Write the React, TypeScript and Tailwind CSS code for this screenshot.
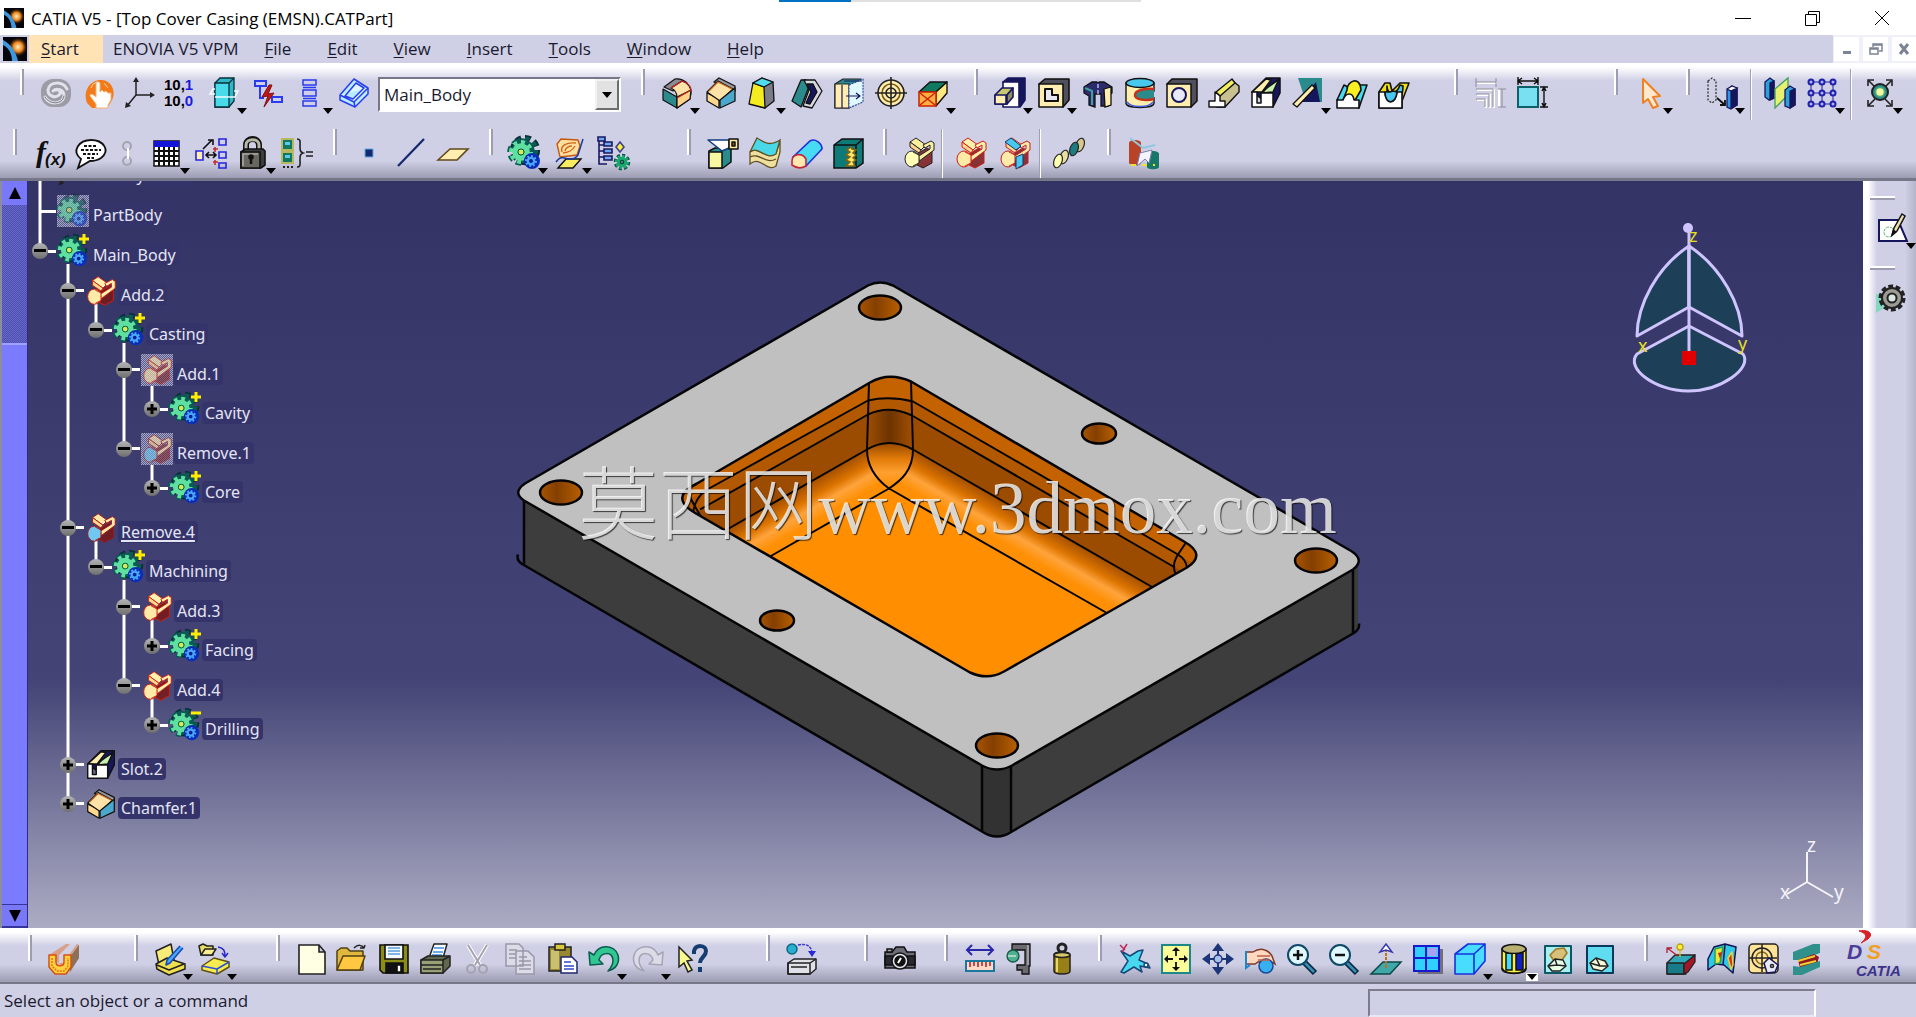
import React, { useState } from 'react';
import clsx from 'clsx';

type IconName = string;

interface Tool {
  icon: IconName;
  label: string;
  menu?: boolean;
  size?: 'xs' | 'sm' | 'md' | 'lg';
  whiteMenu?: boolean;
}

interface TreeNode {
  label: string;
  icon: IconName;
  depth: number;
  state?: 'open' | 'closed';
  hidden?: boolean;
  tall?: boolean;
  active?: boolean;
}

const navy = '#16165c';
const cream = '#ffeeb0';
const teal = '#2a8a8c';

function Gear({ cx, cy, r, fill, edge }: { cx: number; cy: number; r: number; fill: string; edge: string }) {
  return (
    <g fill="none">
      <circle cx={cx} cy={cy} r={r} stroke={edge} strokeWidth={r * 0.75} pathLength={16} strokeDasharray="1.2 .8" />
      <circle cx={cx} cy={cy} r={r * 0.95} stroke={fill} strokeWidth={r * 0.5} pathLength={16} strokeDasharray="1 1" />
      <circle cx={cx} cy={cy} r={r * 0.55} stroke={fill} strokeWidth={r * 0.65} />
      <circle cx={cx} cy={cy} r={r * 0.25} stroke={edge} strokeWidth="1.5" />
    </g>
  );
}

function BodyGears() {
  return (
    <>
      <Gear cx={16} cy={13} r={11} fill="#0d5a52" edge="#08303a" />
      <Gear cx={12} cy={15} r={10} fill="#5fe0a0" edge="#0a5a56" />
      <circle cx="12" cy="15" r="3" fill="#d8e860" stroke="#063" />
      <circle cx="23" cy="24" r="8" fill="#0a2fc0" />
      <Gear cx={22} cy={24} r={5} fill="#48a8ff" edge="#0a1f90" />
    </>
  );
}

function Boolean({ edge, top, ball }: { edge: string; top: string; ball: string }) {
  return (
    <g stroke={edge} strokeWidth="1" strokeLinejoin="round">
      <path d="M14 17l10-6 5 3v12l-9 5-6-3z" fill="#7a1818" fillOpacity=".85" />
      <path d="M7 5l6-4 10 7-5 5z" fill={top} />
      <path d="M7 5v5l9 6 2-3z" fill="#ffd890" />
      <path d="M20 8l8-4 3 2v7L15 25l-4-3 16-10V8l-5 3z" fill={top} />
      <ellipse cx="9" cy="22" rx="7" ry="8" fill={ball} />
      <path d="M10 15l6 3v8l-6 3" fill={ball} />
    </g>
  );
}

const icons: Record<IconName, React.ReactNode> = {
  update: (
    <g fill="none" strokeLinecap="round">
      <rect x="1" y="2" width="30" height="28" rx="12" fill="#9c9ca4" />
      <path d="M27 12C23 4 9 4 8 13c0 7 8 8 11 5s0-6-3-5M5 20c4 8 18 8 19-1 0-7-8-8-11-5" stroke="#e2e2ec" strokeWidth="3" />
      <path d="M5 20c4 8 18 8 19-1" stroke="#77777f" />
    </g>
  ),
  hand: (
    <g>
      <path d="M3 26C-2 12 8 2 18 3s15 12 9 22l-4 6H8z" fill="#f27a18" />
      <path d="M12 31v-4L6 19c0-3 3-2 6 1V7c0-3 4-3 4 0v8l2-2 2 2 2-1 2 2 3 0v7l-3 5v3z" fill="#fff" stroke="#f8b070" />
      <path d="M7 11a8 8 0 0 1 6-6M20 6l4 5" stroke="#ffd0a0" fill="none" />
    </g>
  ),
  axis: (
    <g stroke="#222" fill="#222">
      <path d="M12 18V3M12 18h15M12 18L3 29" fill="none" strokeWidth="1.5" />
      <path d="M9 5l3-5 3 5zM26 15l5 3-5 3zM1 31l1-6 5 4z" stroke="none" />
    </g>
  ),
  units: (
    <g fontFamily="Liberation Sans, Arial, sans-serif" fontWeight="bold" fontSize="15">
      <text x="0" y="13">10,<tspan fill="#1c1ce0">1</tspan></text>
      <text x="0" y="29">10,<tspan fill="#1c1ce0">0</tspan></text>
    </g>
  ),
  section: (
    <g stroke="#08303a" strokeWidth="1.3">
      <path d="M7 6l5-5h14v23l-5 6H7z" fill="#30b8c8" />
      <path d="M7 6h14v24H7z" fill="#48dcea" />
      <path d="M21 6l5-5" />
      <path d="M7 17H2l3-5h2M21 20l6 0 3-6h-4M7 20h14" fill="none" stroke="#eefcff" strokeWidth="1.6" />
    </g>
  ),
  broken: (
    <g fill="none" strokeWidth="2">
      <path d="M3 4h11v5H3zM20 20h10v5H20zM8 9v12h4" stroke="#2a3cf0" />
      <path d="M17 8l-7 12 6-1-4 11 10-14-6 1 4-9z" fill="#c01818" stroke="#801010" strokeWidth="1" />
    </g>
  ),
  stack: <path d="M9 3h13v5H9zM9 13h13v6H9zM9 24h13v5H9zM9 10.500h13M9 21.500h13" fill="none" stroke="#2a3cf0" strokeWidth="1.500" />,
  eraser: (
    <g stroke="#2a3cf0" strokeWidth="1.5" strokeLinejoin="round">
      <path d="M2 18L16 2l14 9v6L17 30 2 23z" fill="#b8ecff" />
      <path d="M2 18l14 7 14-14M16 25l1 5M7 19L18 6l8 5-11 11z" fill="#dff6ff" />
    </g>
  ),
  fillet: (
    <g stroke="#111" strokeWidth="1.2" strokeLinejoin="round">
      <path d="M2 12l14 8v11L2 23z" fill={teal} />
      <path d="M3 10L14 2c5-1 10 2 12 4L12 14z" fill="#8a8a92" />
      <path d="M10 11L21 4c6 2 9 6 9 12l-1 6-13 9V20c0-4-2-7-6-9z" fill="#ffe2a8" />
      <path d="M16 20v11l13-9 1-9z" fill="#ffd088" />
      <path d="M10 11L21 4c6 2 9 5 9 9l-14 8" stroke="#c02020" fill="none" />
    </g>
  ),
  chamfer: (
    <g stroke="#111" strokeWidth="1.3" strokeLinejoin="round">
      <path d="M2 16l12 6v9L2 24z" fill="#ffd890" />
      <path d="M9 5l5-4 16 8v5l-4-1z" fill="#9a9aa0" />
      <path d="M2 15L13 4l15 8-13 12z" fill="#ffe2a8" />
      <path d="M15 23l15-12v13l-15 7z" fill="#4aa8cc" />
      <path d="M4 14L13 5l14 7" stroke="#c86820" fill="none" />
    </g>
  ),
  draft: (
    <g stroke="#111" strokeWidth="1.3" strokeLinejoin="round">
      <path d="M6 6l9-5 11 4 1 19-9 7-14-4z" fill="#7c7c86" />
      <path d="M6 6l11 4 1 21-16-4z" fill="#f4ec20" />
      <path d="M6 6l9-5 11 4-9 5z" fill="#50dcf0" />
    </g>
  ),
  shell: (
    <g stroke="#111" strokeWidth="1.3" strokeLinejoin="round">
      <path d="M1 24L10 3h5l4 4-7 18-2 5z" fill={teal} />
      <path d="M13 3h11l7 11-10 17-9-2 6-16z" fill="#d8d8e0" />
      <path d="M16 7h6l4 8-7 12-4-1 5-11z" fill={navy} />
    </g>
  ),
  thickness: (
    <g stroke="#222" strokeWidth="1.2" strokeLinejoin="round">
      <path d="M2 7l8-5h18v22l-12 7H2z" fill={teal} />
      <path d="M2 7h14v24H2z" fill={cream} />
      <path d="M16 8l14-6v23l-14 6z" fill="#e0f8ff" stroke="#3050a0" strokeDasharray="2 1" />
      <path d="M11 4h18M13 19h14m-4-3l4 3-4 3M9 8v23" stroke={navy} fill="none" />
    </g>
  ),
  thread: (
    <g fill="none" stroke="#222" strokeWidth="1.6">
      <circle cx="16" cy="16" r="13" fill={cream} />
      <circle cx="16" cy="16" r="9" stroke="#7a5a10" />
      <circle cx="16" cy="16" r="5" />
      <path d="M16 0v32M0 16h32" />
    </g>
  ),
  removeFace: (
    <g stroke="#111" strokeWidth="1.4" strokeLinejoin="round">
      <path d="M2 15L13 5h17L19 15z" fill="#0e7a60" />
      <path d="M19 15L30 5v11L19 29z" fill="#ffe880" />
      <path d="M2 15h17v14H2z" fill="#ffb040" stroke="#d02000" strokeWidth="1.500" />
      <path d="M3 16l15 12M18 16L3 28" stroke="#d02000" strokeWidth="1.500" />
    </g>
  ),
  pad: (
    <g stroke={navy} strokeWidth="1.6" strokeLinejoin="round">
      <path d="M9 5l5-4h17v22l-5 7z" fill={navy} />
      <path d="M9 5h16v25H9z" fill="#fff" />
      <path d="M1 18l7-7h11l-6 7v9H1z" fill="#c8c870" />
      <path d="M13 18l6-7v9l-6 7z" fill="#8c8c60" />
      <path d="M1 18h11v9H1z" fill={cream} />
    </g>
  ),
  pocket: (
    <g stroke="#111" strokeWidth="1.6" strokeLinejoin="round">
      <path d="M1 7l6-5h24v21l-6 7z" fill="#50505c" />
      <path d="M1 7h24v23H1z" fill={cream} />
      <path d="M7 12h7v6h6v6H7z" fill="#e8e8f0" strokeWidth="2" />
    </g>
  ),
  shaft: (
    <g stroke="#111" strokeWidth="1.3">
      <path d="M2 10l8-5h12l8 5v6l-4 3v10h-7V17h-6v13l-6-2V19l-5-3z" fill="#2c2c6c" />
      <path d="M22 12l7-2v18l-6 2z" fill={cream} />
      <path d="M3 11l7 3v14" fill="none" stroke="#40a0a0" strokeWidth="2" />
      <path d="M16 1v27" stroke="#c8c8ff" strokeDasharray="4 2" />
    </g>
  ),
  groove: (
    <g stroke="#111" strokeWidth="1.4">
      <path d="M2 6v20c0 6 28 6 28 0v-5c-8 2-16 0-16-3s8-5 16-4V6z" fill={cream} />
      <path d="M30 12c-8-1-19 1-19 6s11 6 19 4" fill={teal} stroke="#c83018" strokeWidth="2.500" />
      <path d="M3 25c4 6 22 6 26 0" fill="none" stroke="#4060e0" />
      <ellipse cx="16" cy="6" rx="14" ry="4.500" fill="#48c8ec" />
    </g>
  ),
  hole: (
    <g stroke="#111" strokeWidth="1.5" strokeLinejoin="round">
      <path d="M1 7l5-5h25v22l-6 6z" fill="#50505c" />
      <path d="M1 7h24v23H1z" fill={cream} />
      <circle cx="13" cy="18" r="7" fill="#e8e8f8" stroke={navy} strokeWidth="2" />
    </g>
  ),
  rib: (
    <g stroke="#111" strokeWidth="1.4" strokeLinejoin="round">
      <path d="M8 17L26 5l5 4v6L17 30H9z" fill="#c8c090" />
      <path d="M8 15L24 2l3 4-15 13z" fill="#f0ec60" />
      <path d="M1 30v-6h6v-9l5 4v5h5v6z" fill="#fff" />
    </g>
  ),
  slot: (
    <g stroke="#111" strokeWidth="1.5" strokeLinejoin="round">
      <path d="M2 15L16 1h14v15L23 30z" fill={navy} />
      <path d="M2 15L16 2l5 1-9 12z" fill={cream} />
      <path d="M13 16c2-6 10-8 16-14l-6 13z" fill="#c8f0b0" />
      <path d="M2 15h5v11h4V16h12v14H2z" fill="#fff" />
    </g>
  ),
  stiffener: (
    <g strokeLinejoin="round">
      <path d="M6 1h24v24H14z" fill={teal} />
      <path d="M7 25L24 5l4 20z" fill={navy} />
      <path d="M1 27L20 8l3 3L5 30z" fill={cream} stroke="#111" strokeWidth="1.3" />
    </g>
  ),
  loft: (
    <g stroke="#111" strokeWidth="1.6" strokeLinejoin="round">
      <path d="M1 23L8 8l6 3 8-3h9l-6 17-2 6z" fill="#48d8f0" />
      <path d="M11 13c0-9 13-15 14 0l-7 12c0-9-9-6-11-2z" fill="#f8f020" />
      <path d="M1 23h6c3-8 10-8 11 0h5v8H1z" fill="#fff" />
    </g>
  ),
  cutLoft: (
    <g stroke="#111" strokeWidth="1.6" strokeLinejoin="round">
      <path d="M1 15l6-9h5l2 8 8-8h9l-7 18v7H1z" fill="#f0e018" />
      <path d="M9 9c0 10 10 8 13-1l3 1c0 12-6 20-9 20s-8-4-7-11z" fill="#48c8f0" />
      <path d="M1 15h6c0 13 11 13 12 0h5v16H1z" fill="#fff" />
      <path d="M7 15c0 13 11 13 12 0l-4-1-3 1z" fill="#48c8f0" />
    </g>
  ),
  constraintDialog: (
    <g fill="none" stroke="#fff" strokeWidth="1">
      <path d="M3 6h20M3 13h17v18M3 18h13v13M3 23h9v8M25 12v18" strokeWidth="2" />
      <path d="M2 5h20M2 1v9M22 1v9M2 12h17v18M2 17h13v13M2 22h9v8M24 12h8M24 30h8M28 12v18" stroke="#8c8c98" />
    </g>
  ),
  constraint: (
    <g strokeWidth="1.4" stroke="#111" fill="none">
      <rect x="2" y="10" width="20" height="20" fill="#78e0f0" stroke="#0e6068" strokeWidth="2" />
      <path d="M2 0v8M22 0v8M3 4h18M6 1L2 4l4 3M18 1l4 3-4 3M24 10h8M24 30h8M28 11v18M26 14l2-4 2 4M26 26l2 4 2-4" />
    </g>
  ),
  cursor: <path d="M9 2l17 17-7 1 5 9-5 2-5-9-5 4z" fill="#ffe8d0" stroke="#f08020" strokeWidth="2" strokeLinejoin="round" />,
  translate: (
    <g stroke={navy} strokeWidth="1.3">
      <path d="M2 4l4-3 4 3v19l-4 3-4-3z" fill="none" strokeDasharray="2 1.500" stroke="#333" />
      <path d="M11 21l8 7m-5 0h5v-5" fill="none" stroke="#111" strokeWidth="1.8" />
      <path d="M21 13l5-4 5 3v16l-6 4-4-2z" fill="#2c9ae8" />
      <path d="M25 14l6-3v17l-6 3z" fill={navy} />
      <path d="M21 12l5-3 5 2-6 3z" fill="#fff" />
    </g>
  ),
  mirror: (
    <g stroke={navy} strokeWidth="1.3">
      <path d="M1 5l5-4 4 3v17l-5 2-4-3z" fill="#2ca0d8" />
      <path d="M6 6l4-2v17l-4 2z" fill={navy} />
      <path d="M11 12L24 1v17L11 31z" fill="#e8f070" stroke="#40a060" />
      <path d="M21 13l5-4 5 3v16l-5 3-5-2z" fill="#2ca0d8" />
      <path d="M26 14l5-2v16l-5 3z" fill={navy} />
    </g>
  ),
  pattern: (
    <g fill="#b0b4ff" stroke="#2020a8" strokeWidth="2">
      <path d="M2 5h28M2 16h28M2 27h28M5 2v28M16 2v28M27 2v28" strokeWidth="1" />
      {[5, 16, 27].map((x) => [5, 16, 27].map((y) => <circle key={`${x}-${y}`} cx={x} cy={y} r="2.500" />))}
    </g>
  ),
  scaling: (
    <g stroke="#222" strokeWidth="1.6" fill="none">
      <path d="M5 4l6 6M27 4l-6 6M5 28l6-6M27 28l-6-6M4 9V3h6M22 3h6v6M4 23v6h6M22 29h6v-6" />
      <circle cx="16" cy="15" r="8" fill={teal} strokeWidth="2" />
      <circle cx="16" cy="15" r="4.500" fill="#f0f8a0" stroke="#50a878" />
    </g>
  ),
  formula: (
    <g fontFamily="Liberation Serif, serif" fontStyle="italic" fontWeight="bold" fill="#111">
      <text x="3" y="25" fontSize="30">f</text>
      <text x="12" y="28" fontSize="17" fontFamily="Liberation Sans, sans-serif">(x)</text>
    </g>
  ),
  comment: (
    <g stroke="#111" strokeWidth="1.8">
      <path d="M6 22C-4 14 4 3 16 3s20 10 10 18c-3 2-8 3-11 3L3 31z" fill="#fff" />
      <path d="M9 9h13M6 13h20M8 17h15M12 21h7" strokeDasharray="3 1.500" />
    </g>
  ),
  link: (
    <g fill="none" stroke="#a4a4b0" strokeWidth="2">
      <circle cx="14" cy="9" r="4" />
      <circle cx="14" cy="24" r="4" />
      <path d="M15 11v11" stroke="#fff" />
    </g>
  ),
  table: (
    <g>
      <path d="M3 4h25v25H3z" fill="#fff" stroke="#111" strokeWidth="1.5" />
      <path d="M3 4h25v6H3z" fill="#1414d8" />
      <path d="M3 14h25M3 19h25M3 24h25M8 10v19M13 10v19M18 10v19M23 10v19" stroke="#111" strokeWidth="2" />
    </g>
  ),
  relations: (
    <g fill="none" stroke="#2424e0" strokeWidth="1.6">
      <path d="M1 14h7v9H1z" fill={cream} />
      <path d="M24 2h7v6h-7zM24 15h7v6h-7zM24 26h7v5h-7z" />
      <path d="M8 12l9-9m-4 0h5v5M11 18h10m-3-3l3 3-3 3M14 15l-3 3 3 3" stroke="#111" />
      <path d="M18 12h5M18 25h5M20 10v5M20 23v5" stroke="#c03030" />
    </g>
  ),
  lock: (
    <g stroke="#111" strokeWidth="1.6">
      <path d="M9 15V8c0-8 13-8 13 0v7" fill="none" stroke="#111" strokeWidth="6" />
      <path d="M9 15V8c0-7 13-7 13 0v7" fill="none" stroke="#b8b8a8" strokeWidth="3" />
      <path d="M4 15l4-3h18l2 2v14l-4 3H4z" fill="#3c3c3c" />
      <path d="M4 15h19v16H4z" fill="#686860" />
      <path d="M6 29V17h15" stroke="#a8a8a0" fill="none" />
      <circle cx="14" cy="20" r="2" fill="#111" />
      <path d="M14 21v6" strokeWidth="2.500" />
    </g>
  ),
  equivalent: (
    <g fill="none" stroke="#222">
      <path d="M1 2h11v11H1zM1 15h11v11H1z" fill="#107860" stroke="#b8b860" strokeWidth="2" />
      <path d="M4 5h5v3H4zM4 18h5v3H4z" fill="#60c8f0" stroke="none" />
      <path d="M2 30h2M6 30h2M10 30h2" strokeWidth="2" />
      <path d="M16 2c4 0 3 3 3 7s0 6 3 7c-3 1-3 3-3 7s1 7-3 7M25 15h7M25 19h7" strokeWidth="1.600" />
    </g>
  ),
  point: <path d="M12 12h8v8h-8z" fill="#14286e" stroke="#60a8e8" />,
  line: <path d="M3 29L29 2" stroke="#14286e" strokeWidth="2.200" />,
  plane: <path d="M1 23L13 12h18L20 23z" fill={cream} stroke="#604818" strokeWidth="1.600" />,
  body: <BodyGears />,
  geoset: (
    <g stroke="#111" strokeWidth="1.4">
      <path d="M4 7l4-5 17 1 2 6-3 9-17 2z" fill="#ffe0a0" stroke="#c85810" />
      <path d="M9 15c-2-6 4-10 14-9M10 16c6-1 9-2 12-7M12 14c0-3 4-5 7-5" stroke="#d06818" fill="none" />
      <path d="M5 31l8-9h15l-8 9z" fill="#f8ec60" />
      <path d="M3 25c7-11 14 4 22-7l5-16" fill="none" stroke="#1c3c98" strokeWidth="1.500" />
    </g>
  ),
  insertTree: (
    <g fill="none" stroke="#181860" strokeWidth="1.6">
      <path d="M2 2v25h8M2 8h6M2 14h6M2 20h6" />
      <path d="M7 5h8v4H7zM7 12h8v4H7zM7 19h8v4H7zM1 0h7v4H1z" fill="#70a8f0" />
      <path d="M23 5l4 5-4 5-4-5z" fill="#f8f040" stroke="#404090" />
      <Gear cx={25} cy={25} r={6} fill="#18a870" edge="#084838" />
    </g>
  ),
  split: (
    <g stroke="#111" strokeWidth="1.5" strokeLinejoin="round">
      <path d="M2 14l6-3h10l6-3v17l-8 6H2z" fill={teal} />
      <path d="M2 15h13v16H2z" fill="#f8f8a0" />
      <path d="M1 3l21 0v8l-7 3z" fill="#fff" stroke="#103c80" />
      <path d="M22 2h9v10h-9z" fill="#ffe8a0" />
      <path d="M25 5h3v4h-3z" fill="#806018" />
    </g>
  ),
  thickSurface: (
    <g stroke="#605020" strokeWidth="1.3">
      <path d="M1 15C10 8 16 24 27 16l4-12v11l-4 14C18 36 12 18 1 27z" fill="#f0e0a0" />
      <path d="M1 15L8 1c7 4 12 9 23 2l-4 14C16 24 10 8 1 15z" fill="#48d8e8" />
      <path d="M1 20c10-5 15 8 26 2" fill="none" />
    </g>
  ),
  closeSurface: (
    <g stroke="#2030d8" strokeWidth="1.600">
      <path d="M2 20L19 4c5-3 12 2 12 8L15 29z" fill="#48dcf4" />
      <path d="M1 24c0-7 10-9 14-2v7c-5 3-10 2-14-1z" fill="#ffe8b0" stroke="#c02838" />
    </g>
  ),
  sew: (
    <g stroke="#111" strokeWidth="1.500">
      <path d="M1 8l8-6h21v24l-7 5H1z" fill="#0e7a78" />
      <path d="M1 8h22L30 2M23 8v23" fill="none" />
      <path d="M18 10l-4 3 3 2-4 3 4 2-4 3 4 2-4 4h9l-2-4 3-2-3-2 3-3-3-2 3-3-4-1z" fill="#f8e868" stroke="#806010" />
    </g>
  ),
  assemble: <Boolean edge="#222" top="#f8f0a0" ball="#ffffb8" />,
  add: <Boolean edge="#d02010" top="#fff0b0" ball="#ffeaa8" />,
  remove: <Boolean edge="#a01818" top="#ffe8a8" ball="#70c8f0" />,
  unionTrim: (
    <g>
      <Boolean edge="#c02020" top="#ffe8a8" ball="#ffeaa8" />
      <path d="M6 5l6-4 10 8-5 4zM17 20l7-3v11l-7 4z" fill="#48c8f0" stroke="#143868" />
    </g>
  ),
  lump: (
    <g stroke="#222" strokeWidth="1.200">
      <ellipse cx="11" cy="20" rx="4" ry="7" fill="#e8e0a0" transform="rotate(20 11 20)" />
      <ellipse cx="5" cy="24" rx="4" ry="7" fill="#ffffb0" transform="rotate(20 5 24)" />
      <ellipse cx="27" cy="8" rx="4" ry="7" fill="#d8c890" transform="rotate(20 27 8)" />
      <ellipse cx="21" cy="12" rx="4" ry="7" fill="#1c7c80" transform="rotate(20 21 12)" />
    </g>
  ),
  powercopy: (
    <g>
      <path d="M2 6c0-4 12-4 12 0v20c0 3-12 2-12 0z" fill="#b84428" />
      <path d="M3 1l13 10 12-3" stroke="#90c8e0" strokeWidth="2" fill="none" />
      <path d="M20 17c0-4 12-4 12 0v13c0 3-12 3-12 0z" fill="#187868" />
      <path d="M4 28h24" stroke="#f0e030" strokeWidth="2" strokeDasharray="5 6" />
      <path d="M10 29l3-13 12-3-3 13-4-4z" fill="#f4f4ff" stroke="#8080b0" />
    </g>
  ),
  sketch: (
    <g>
      <path d="M2 8h19l9 21H2z" fill="#fff" stroke={navy} strokeWidth="2" />
      <circle cx="12" cy="20" r="5" fill="none" stroke="#60b070" strokeDasharray="3 1" />
      <path d="M15 23l2-7L25 2l3 2-8 15z" fill="#ece0b0" stroke="#111" strokeWidth="1.500" />
      <path d="M14 25l2-8 4 3z" fill="#111" />
    </g>
  ),
  workshop: (
    <g>
      <path d="M1 12h8v14l-8 5z" fill="#84d8c0" />
      <circle cx="17" cy="16" r="11" fill="none" stroke="#222" strokeWidth="5" pathLength={20} strokeDasharray="1.300 .7" />
      <circle cx="17" cy="16" r="10" fill="#9c9c94" stroke="#222" strokeWidth="2" />
      <circle cx="17" cy="16" r="4.500" fill="#d8e8e0" stroke="#222" strokeWidth="2" />
    </g>
  ),
  partDesign: (
    <g strokeLinejoin="round" strokeWidth="1.5">
      <path d="M1 12L18 1h4L11 12v8l4 0L29 1l2 1v13L21 29z" fill="#d8a088" />
      <path d="M22 14L31 2v13l-9 14z" fill="#8c7058" />
      <path d="M1 12h7v7c0 5 8 5 8 0v-7h7v12l-5 7H7l-6-7z" fill="#ffd040" stroke="#d85010" />
      <path d="M4 15v8l5 5h7l4-5v-8" fill="none" stroke="#e07818" strokeDasharray="2 1" />
    </g>
  ),
  catalog: (
    <g stroke="#222" strokeWidth="1.500" strokeLinejoin="round">
      <path d="M2 8L17 1l3 16-15 5z" fill="#f8ec78" />
      <path d="M2 21l11-6 18 6v5l-16 6L3 26z" fill="#f0e050" />
      <path d="M3 22l12 5 15-6" fill="none" />
      <path d="M29 5L16 20l-4 2 1-5L26 3" fill="#48a8f0" stroke="#1848b8" />
    </g>
  ),
  catalogOpen: (
    <g stroke="#222" strokeWidth="1.500" strokeLinejoin="round">
      <path d="M1 3l4-2 4 2h6v9H3z" fill="#e8e060" />
      <path d="M3 12l4-6h11l-4 6z" fill="#f8f090" />
      <path d="M20 4c6 1 7 4 7 9m-3-3l3 4 3-4" fill="none" stroke="#2828c8" />
      <path d="M4 23l12-8 15 4v5l-12 7-15-4z" fill="#f8ec50" stroke="#605010" />
      <path d="M4 23l15 3 12-7M19 26v5" fill="none" stroke="#2850d8" />
    </g>
  ),
  file: <path d="M3 2h20l6 7v22H3zM23 2v7h6" fill="#ffffe4" stroke="#222" strokeWidth="1.600" />,
  open: (
    <g stroke="#504010" strokeWidth="1.500" strokeLinejoin="round">
      <path d="M1 27V8l4-3h6l3 3h13v19z" fill="#e0b840" />
      <path d="M1 27l6-14h22l-5 14z" fill="#ffc840" />
      <path d="M18 5c4-4 8-3 10 0l1-3m-1 3h-4" fill="none" stroke="#222" />
    </g>
  ),
  save: (
    <g stroke="#111" strokeWidth="1.600">
      <path d="M2 2h28v28H5l-3-3z" fill="#8c8c18" />
      <path d="M7 2h18v14H7z" fill="#f4f8ff" />
      <path d="M10 5h12M10 8h12M10 11h12" stroke="#58a0e0" />
      <path d="M8 20h17v10H8z" fill="#111" />
      <path d="M19 22h4v7h-4z" fill="#fff" />
    </g>
  ),
  print: (
    <g stroke="#222" strokeWidth="1.500" strokeLinejoin="round">
      <path d="M9 15L14 1h13l-4 14z" fill="#fff" />
      <path d="M14 5h10M13 9h10M12 12h10" stroke="#3890e8" />
      <path d="M1 17l7-4h22v10l-7 7H1z" fill="#606850" />
      <path d="M1 17h22v13H1z" fill="#98a078" />
      <path d="M23 17l7-4M1 22h22M3 26h18" />
    </g>
  ),
  cut: (
    <g fill="none" stroke="#a4a4b0" strokeWidth="2">
      <path d="M6 2l12 20M25 2L13 22" stroke="#fff" strokeWidth="4" />
      <path d="M6 2l12 20M25 2L13 22" />
      <circle cx="9" cy="26" r="4" />
      <circle cx="21" cy="26" r="4" />
    </g>
  ),
  copy: (
    <g fill="#dcdce8" stroke="#9898a8" strokeWidth="1.500">
      <path d="M2 1h13l4 4v18H2zM12 8h12l6 6v17H12z" />
      <path d="M5 7h8M5 11h7M5 15h7M15 14h8M15 18h12M15 22h12M15 26h12" />
    </g>
  ),
  paste: (
    <g stroke="#222" strokeWidth="1.500">
      <path d="M3 4h22v24H3z" fill="#988830" />
      <path d="M5 7h8v19H5z" fill="#c8c070" stroke="none" />
      <path d="M9 1h10v6H9z" fill="#d8c840" />
      <path d="M15 14h11l5 5v11H15z" fill="#fff" stroke="#202870" />
      <path d="M18 19h7M18 23h10M18 26h10" stroke="#3048d0" />
    </g>
  ),
  undo: <path d="M1 9l1 13 13-1-4-4c2-8 13-9 14 0 0 5-2 8-5 11 8-2 12-8 10-16C27 2 11 0 6 12z" fill="#30c890" stroke="#0c5a50" strokeWidth="1.500" strokeLinejoin="round" />,
  redo: <path d="M31 9l-1 13-13-1 4-4C19 9 8 8 7 17c0 5 2 8 5 11-8-2-12-8-10-16C5 2 21 0 26 12z" fill="#dcdce8" stroke="#a4a4b4" strokeWidth="1.500" strokeLinejoin="round" />,
  help: (
    <g>
      <path d="M3 4l13 13-5 1 5 9-4 2-4-9-5 4z" fill="#f8f890" stroke="#222" strokeWidth="1.500" />
      <path d="M18 11V8c2-7 12-6 12 0 0 6-6 6-6 12M24 24v5" fill="none" stroke="#143c70" strokeWidth="4" />
    </g>
  ),
  send: (
    <g stroke="#222" strokeWidth="1.500" strokeLinejoin="round">
      <circle cx="6" cy="6" r="5" fill="#28b0d0" stroke="#106880" />
      <path d="M12 2c8-2 14 1 14 9" fill="none" stroke="#3838d8" strokeDasharray="3 1" />
      <path d="M22 8h8l-4 6z" fill="#2828d8" stroke="none" />
      <path d="M2 20l6-4h22v10l-6 5H2z" fill="#e0e0e8" />
      <path d="M2 20h22v11H2zM24 20l6-4M5 24h16" fill="none" />
    </g>
  ),
  camera: (
    <g stroke="#111" strokeWidth="1.500">
      <path d="M1 9h7l4-5h8l3 5h8v16H1z" fill="#6c6c78" />
      <path d="M1 13h30v9H1z" fill="#282830" />
      <path d="M3 6h5v3H3z" fill="#aaa" />
      <circle cx="16" cy="18" r="8" fill="#e4e4ec" />
      <circle cx="16" cy="18" r="5" fill="#111" />
      <path d="M14 20l3-5" stroke="#fff" strokeWidth="2" />
    </g>
  ),
  measure: (
    <g strokeWidth="2">
      <path d="M3 7h26M8 2L3 7l5 5M24 2l5 5-5 5" fill="none" stroke="#2828a8" />
      <path d="M2 18h28v10H2z" fill="#ffd8c8" stroke="#1878a0" />
      <path d="M6 19v5M10 19v4M14 19v5M18 19v4M22 19v5M26 19v4" stroke="#a02020" strokeWidth="1.500" />
    </g>
  ),
  clamp: (
    <g stroke="#111" strokeWidth="1.300">
      <path d="M6 1h18v22h-1v8h-7v-4h-5v-5h8V7H6z" fill="#6a6a70" />
      <path d="M22 2v20" stroke="#bbb" />
      <circle cx="7" cy="13" r="6" fill="#50b090" stroke="#185848" />
      <path d="M2 13h8" stroke="#d8f0e0" />
    </g>
  ),
  weight: (
    <g stroke="#222" strokeWidth="1.500">
      <circle cx="14" cy="5" r="4" fill="none" strokeWidth="3" />
      <path d="M6 12c0-4 16-4 16 0v16c0 4-16 4-16 0z" fill="#988018" />
      <path d="M9 13v16" stroke="#e8d860" strokeWidth="2" />
      <ellipse cx="14" cy="12" rx="8" ry="2.500" fill="#d8c868" />
    </g>
  ),
  fly: (
    <g stroke="#184878" strokeWidth="1.500" strokeLinejoin="round">
      <path d="M3 8l9 5 8-5 5-1-4 10 9 4 2 4-10-2 2 6-8-5-10 6-3-1 7-11z" fill="#48d8f0" />
      <path d="M2 2l5 5M9 1L4 9" stroke="#c02858" />
      <circle cx="28" cy="22" r="2" fill="#fff" />
    </g>
  ),
  fit: (
    <g>
      <path d="M2 2h28v28H2z" fill="#fcfc98" stroke="#1c8888" strokeWidth="2" />
      <path d="M16 13V6M16 19v7M13 16H5M19 16h8" stroke="#111" strokeWidth="1.800" />
      <path d="M12 8l4-4 4 4zM12 24l4 4 4-4zM8 12l-4 4 4 4zM24 12l4 4-4 4z" fill="#111" />
    </g>
  ),
  pan: (
    <g fill="#1c3478">
      <path d="M15 5h2v22h-2zM5 15h22v2H5z" />
      <path d="M10 8l6-8 6 8zM10 24l6 8 6-8zM8 10l-8 6 8 6zM24 10l8 6-8 6z" />
      <circle cx="16" cy="16" r="4" fill="#a8c0e8" stroke="#1c3478" strokeWidth="1.500" />
    </g>
  ),
  rotate: (
    <g strokeWidth="1.500">
      <path d="M2 9l7 0c6-4 14-4 19 4l3 8-5-3-12 1-3 2-9 0z" fill="#ffd8c0" stroke="#803828" />
      <path d="M2 8v17l4-3" stroke="#1888c8" strokeWidth="2" fill="none" />
      <circle cx="22" cy="23" r="7" fill="#38b0f0" stroke="#184898" />
      <path d="M13 13h13M14 17h12" stroke="#c06048" />
    </g>
  ),
  zoomIn: (
    <g>
      <path d="M18 19l11 11" stroke="#082840" strokeWidth="6" />
      <path d="M18 19l10 10" stroke="#3890b8" strokeWidth="2.500" />
      <circle cx="12" cy="12" r="10" fill="#e0f8ff" stroke="#104868" strokeWidth="2" />
      <path d="M12 7v10M7 12h10" stroke="#111" strokeWidth="2.500" />
    </g>
  ),
  zoomOut: (
    <g>
      <path d="M18 19l11 11" stroke="#082840" strokeWidth="6" />
      <path d="M18 19l10 10" stroke="#3890b8" strokeWidth="2.500" />
      <circle cx="12" cy="12" r="10" fill="#e0f8ff" stroke="#104868" strokeWidth="2" />
      <path d="M7 12h10" stroke="#111" strokeWidth="2.500" />
    </g>
  ),
  normal: (
    <g>
      <path d="M1 31l12-12h18L20 31z" fill="#40a8a8" stroke="#0c4848" strokeWidth="1.500" />
      <path d="M16 25V8" stroke="#c07018" strokeWidth="2" strokeDasharray="3 1" />
      <path d="M10 9l6-8 6 8-6-2z" fill="#fff" stroke="#3838b0" strokeWidth="1.500" />
    </g>
  ),
  multiView: (
    <g>
      <path d="M6 6h25v25H6z" fill="#70707c" />
      <path d="M2 3h25v25H2z" fill="#30d0ff" stroke="#1818d0" strokeWidth="2" />
      <path d="M14 3v25M2 15h25" stroke="#1818d0" strokeWidth="2" />
      <path d="M16 5h9v8h-9z" fill="#a8a0f0" />
    </g>
  ),
  iso: (
    <g stroke="#1830e0" strokeWidth="1.600" strokeLinejoin="round" fill="#48dcff">
      <path d="M1 11L14 1h17L20 11zM1 11h19v20H1zM20 11L31 1v17L20 31z" />
    </g>
  ),
  shading: (
    <g stroke="#111" strokeWidth="1.500">
      <path d="M4 6v20c0 6 24 6 24 0V6z" fill="#f8f040" />
      <path d="M8 10h6v17H8z" fill="#48d8f8" />
      <path d="M18 10h7v17h-7z" fill="#1020c0" />
      <ellipse cx="16" cy="6" rx="12" ry="4.500" fill="#b8b070" stroke="#111" />
      <path d="M4 25c3 7 21 7 24 0" fill="none" />
      <path d="M16 11v17" stroke="#f8f040" strokeWidth="2" />
    </g>
  ),
  hide: (
    <g stroke="#222" strokeWidth="1.500" strokeLinejoin="round">
      <path d="M3 3h26v27H3z" fill="#a8f0f0" stroke="#0c5868" strokeWidth="2" />
      <path d="M8 12l6-6 8-1 3 5-5 7-8 1z" fill="#d8c078" stroke="#a07828" />
      <path d="M6 23l7-7 8 1 3 6-6 5-8 0z" fill="#e8ffe8" />
      <path d="M6 23l9-1 9 1M13 16l2 6" fill="none" />
    </g>
  ),
  swap: (
    <g stroke="#222" strokeWidth="1.500" strokeLinejoin="round">
      <path d="M3 3h26v27H3z" fill="#60dcf0" stroke="#0c3858" strokeWidth="2" />
      <path d="M6 20l6-5 9 3 3 5-6 5-9-2z" fill="#f4f8d8" />
      <path d="M6 20l10 3 8 0M12 15l4 8" fill="none" />
    </g>
  ),
  draftAnalysis: (
    <g stroke="#222" strokeWidth="1.300" strokeLinejoin="round">
      <path d="M3 20l8-8h20l-9 9v10H3z" fill="#30a8b8" />
      <path d="M3 20h17v11H3z" fill="#187c88" />
      <path d="M20 21l11-9v7l-7 10-4 2z" fill="#a01828" />
      <path d="M14 13L3 5m0 5V5h5" fill="none" stroke="#b02030" />
      <path d="M16 14V6" stroke="#e0c020" />
      <circle cx="16" cy="4" r="3" fill="#f8f040" stroke="#c0a000" />
    </g>
  ),
  curvature: (
    <g stroke="#141450" strokeWidth="1.500" strokeLinejoin="round">
      <path d="M2 16L8 4l11-3 11 3-3 26-9-8-8-1-8 6z" fill="#30c8e8" />
      <path d="M9 6l8-2-3 16-5 1z" fill="#f0e838" stroke="#28a050" />
      <path d="M12 10l4-1-2 7z" fill="#d02010" stroke="none" />
      <path d="M19 2l-2 20" fill="none" />
      <path d="M22 15l4-6 1 13-2 4z" fill="#d03820" stroke="#f0d030" />
    </g>
  ),
  tapThread: (
    <g stroke="#222" strokeWidth="1.500" fill="none">
      <rect x="1" y="1" width="29" height="29" rx="4" fill="#ffe498" />
      <circle cx="14" cy="15" r="10" />
      <circle cx="14" cy="15" r="6" stroke="#886820" />
      <path d="M14 1v28M1 15h28" />
      <path d="M16 20l5-5 9 7-3 7-8 1z" fill="#e8e8f8" stroke={navy} />
      <circle cx="24" cy="23" r="1.500" />
    </g>
  ),
  thicknessAnalysis: (
    <g strokeLinejoin="round">
      <path d="M3 9l20-8h7v9l-20 7H3z" fill="#30908c" />
      <path d="M8 17l16-6 5 3-2 7-17 4z" fill="#901820" />
      <path d="M8 18l17-5M10 22l16-4" stroke="#f0d030" strokeWidth="2" />
      <path d="M3 23l7 1 20-6v6l-18 8H3z" fill="#30908c" />
    </g>
  ),
};

function Icon({ name, className }: { name: IconName; className?: string }) {
  return (
    <svg viewBox="0 0 32 32" className={clsx('block h-8 w-8 shrink-0 overflow-visible', className)} aria-hidden="true">
      {icons[name]}
    </svg>
  );
}

const bodyTools: Tool[] = [
  { icon: 'update', label: 'Update All', size: 'lg' },
  { icon: 'hand', label: 'Manual Update Mode', size: 'sm' },
  { icon: 'axis', label: 'Axis System', size: 'sm' },
  { icon: 'units', label: 'Mean Dimensions', size: 'lg' },
  { icon: 'section', label: 'Dynamic Sectioning', menu: true },
  { icon: 'broken', label: 'Isolate' },
  { icon: 'stack', label: 'Scan', menu: true },
  { icon: 'eraser', label: 'Only Current Body', size: 'sm' },
];

const dressUpTools: Tool[] = [
  { icon: 'fillet', label: 'Edge Fillet', menu: true },
  { icon: 'chamfer', label: 'Chamfer' },
  { icon: 'draft', label: 'Draft Angle', menu: true },
  { icon: 'shell', label: 'Shell' },
  { icon: 'thickness', label: 'Thickness' },
  { icon: 'thread', label: 'Thread/Tap' },
  { icon: 'removeFace', label: 'Remove Face', menu: true },
];

const sketchTools: Tool[] = [
  { icon: 'pad', label: 'Pad', menu: true },
  { icon: 'pocket', label: 'Pocket', menu: true },
  { icon: 'shaft', label: 'Shaft' },
  { icon: 'groove', label: 'Groove' },
  { icon: 'hole', label: 'Hole' },
  { icon: 'rib', label: 'Rib' },
  { icon: 'slot', label: 'Slot' },
  { icon: 'stiffener', label: 'Stiffener', menu: true },
  { icon: 'loft', label: 'Multi-sections Solid' },
  { icon: 'cutLoft', label: 'Removed Multi-sections Solid' },
];

const knowledgeTools: Tool[] = [
  { icon: 'formula', label: 'Formula' },
  { icon: 'comment', label: 'Comment', size: 'xs' },
  { icon: 'link', label: 'Link', size: 'xs' },
  { icon: 'table', label: 'Design Table', menu: true },
  { icon: 'relations', label: 'Relations' },
  { icon: 'lock', label: 'Lock Parameters', menu: true },
  { icon: 'equivalent', label: 'Equivalent Dimensions' },
];

const referenceTools: Tool[] = [
  { icon: 'point', label: 'Point' },
  { icon: 'line', label: 'Line' },
  { icon: 'plane', label: 'Plane' },
];

const insertTools: Tool[] = [
  { icon: 'body', label: 'Body', menu: true },
  { icon: 'geoset', label: 'Geometrical Set', menu: true },
  { icon: 'insertTree', label: 'Insert in New Body' },
];

const surfaceTools: Tool[] = [
  { icon: 'split', label: 'Split' },
  { icon: 'thickSurface', label: 'Thick Surface' },
  { icon: 'closeSurface', label: 'Close Surface' },
  { icon: 'sew', label: 'Sew Surface' },
];

const standardTools: Tool[] = [
  { icon: 'file', label: 'New', size: 'sm' },
  { icon: 'open', label: 'Open' },
  { icon: 'save', label: 'Save' },
  { icon: 'print', label: 'Print' },
  { icon: 'cut', label: 'Cut' },
  { icon: 'copy', label: 'Copy' },
  { icon: 'paste', label: 'Paste' },
  { icon: 'undo', label: 'Undo', menu: true },
  { icon: 'redo', label: 'Redo', menu: true },
  { icon: 'help', label: "What's This?" },
];

const viewTools: Tool[] = [
  { icon: 'fly', label: 'Fly Mode' },
  { icon: 'fit', label: 'Fit All In' },
  { icon: 'pan', label: 'Pan' },
  { icon: 'rotate', label: 'Rotate' },
  { icon: 'zoomIn', label: 'Zoom In' },
  { icon: 'zoomOut', label: 'Zoom Out' },
  { icon: 'normal', label: 'Normal View' },
  { icon: 'multiView', label: 'Create Multi-View' },
  { icon: 'iso', label: 'Isometric View', menu: true },
  { icon: 'shading', label: 'Shading with Edges', menu: true, whiteMenu: true },
  { icon: 'hide', label: 'Hide/Show' },
  { icon: 'swap', label: 'Swap Visible Space' },
];

const analysisTools: Tool[] = [
  { icon: 'draftAnalysis', label: 'Draft Analysis' },
  { icon: 'curvature', label: 'Curvature Analysis' },
  { icon: 'tapThread', label: 'Tap-Thread Analysis' },
  { icon: 'thicknessAnalysis', label: 'Wall Thickness Analysis' },
];

const menus = ['File', 'Edit', 'View', 'Insert', 'Tools', 'Window', 'Help'];

const tree: TreeNode[] = [
  { label: 'Axis Systems', icon: 'axis', depth: 0, tall: true },
  { label: 'PartBody', icon: 'body', depth: 0, hidden: true, tall: true },
  { label: 'Main_Body', icon: 'body', depth: 0, state: 'open', tall: true },
  { label: 'Add.2', icon: 'add', depth: 1, state: 'open' },
  { label: 'Casting', icon: 'body', depth: 2, state: 'open', tall: true },
  { label: 'Add.1', icon: 'add', depth: 3, state: 'open', hidden: true },
  { label: 'Cavity', icon: 'body', depth: 4, state: 'closed', tall: true },
  { label: 'Remove.1', icon: 'remove', depth: 3, state: 'open', hidden: true },
  { label: 'Core', icon: 'body', depth: 4, state: 'closed', tall: true },
  { label: 'Remove.4', icon: 'remove', depth: 1, state: 'open', active: true },
  { label: 'Machining', icon: 'body', depth: 2, state: 'open', tall: true },
  { label: 'Add.3', icon: 'add', depth: 3, state: 'open' },
  { label: 'Facing', icon: 'body', depth: 4, state: 'closed', tall: true },
  { label: 'Add.4', icon: 'add', depth: 3, state: 'open' },
  { label: 'Drilling', icon: 'body', depth: 4, state: 'closed', tall: true },
  { label: 'Slot.2', icon: 'slot', depth: 1, state: 'closed' },
  { label: 'Chamfer.1', icon: 'chamfer', depth: 1, state: 'closed' },
];

const indents = ['pl-1', 'pl-8', 'pl-15', 'pl-22', 'pl-29'];

// One vertical segment per parent, from below its icon to its last child
function getBranches() {
  let y = 0;
  const centers = tree.map((node) => {
    const height = node.tall ? 40 : 39;
    y += height;
    return y - height / 2;
  });
  const branches = [{ x: 12, from: 0, to: centers[2] }];
  tree.forEach((node, index) => {
    let last = -1;
    for (let i = index + 1; i < tree.length && tree[i].depth > node.depth; i++) {
      if (tree[i].depth === node.depth + 1) last = i;
    }
    if (last > 0) {
      branches.push({ x: 12 + (node.depth + 1) * 28, from: centers[index] + 13, to: centers[last] });
    }
  });
  return { branches, height: y };
}

function Grip() {
  return <span className="h-[26px] w-1 shrink-0 border-r-2 border-l-2 border-r-[#9d9db2] border-l-white" />;
}

function Divider() {
  return <span className="mr-3 h-[51px] w-[2px] shrink-0 border-l border-[#a0a0b4] bg-white" />;
}

function ToolButton({ tool }: { tool: Tool }) {
  const size = tool.size ?? (tool.menu ? 'lg' : 'md');
  return (
    <button
      type="button"
      aria-label={tool.label}
      title={tool.label}
      className={clsx(
        'relative mt-2 h-8 shrink-0 text-left',
        size === 'xs' && 'w-[38px]',
        size === 'sm' && 'w-10',
        size === 'md' && 'w-[42px]',
        size === 'lg' && 'w-11'
      )}
    >
      <Icon name={tool.icon} />
      {tool.menu && (
        <span className={clsx('absolute top-[30px] left-7 flex h-2 w-3 items-center justify-center', tool.whiteMenu && 'bg-white')}>
          <svg viewBox="0 0 12 8" className="h-2 w-3">
            <path d="M1 1h10L6 7z" fill="#000" />
          </svg>
        </span>
      )}
    </button>
  );
}

function ToolGroup({ tools, className }: { tools: Tool[]; className?: string }) {
  return (
    <div className={clsx('flex shrink-0', className)}>
      <Grip />
      <div className="ml-4 flex">
        {tools.map((tool) => (
          <ToolButton key={tool.icon} tool={tool} />
        ))}
      </div>
    </div>
  );
}

function AppIcon({ className }: { className?: string }) {
  return (
    <svg viewBox="0 0 24 24" className={className} aria-hidden="true">
      <defs>
        <radialGradient id="glow">
          <stop offset="0" stopColor="#fff0c0" />
          <stop offset=".5" stopColor="#e88018" />
          <stop offset="1" stopColor="#000" stopOpacity="0" />
        </radialGradient>
      </defs>
      <path d="M0 0h24v24H0z" fill="#05060c" />
      <circle cx="15" cy="10" r="10" fill="url(#glow)" />
      <path d="M0 3c8 4 13 12 15 21H9C9 17 6 11 0 8z" fill="#3c98e0" />
      <path d="M0 9c5 3 8 8 8 15H0z" fill="#05060c" />
    </svg>
  );
}

function TitleBar() {
  return (
    <div className="relative flex h-[35px] items-center bg-white pl-1">
      <div className="absolute top-0 left-[779px] flex h-[2px] w-[362px] bg-[#e0e0e0]">
        <div className="w-1/5 bg-[#0072c6]" />
      </div>
      <AppIcon className="h-5 w-5" />
      <h1 className="mt-[2px] ml-[7px] flex-1 text-[17px] text-black">CATIA V5 - [Top Cover Casing (EMSN).CATPart]</h1>
      <div className="flex h-full">
        <button type="button" aria-label="Minimize" className="flex w-[70px] items-center justify-center">
          <svg viewBox="0 0 16 16" className="h-4 w-4"><path d="M0 8.500h16" stroke="#000" /></svg>
        </button>
        <button type="button" aria-label="Restore" className="flex w-[70px] items-center justify-center">
          <svg viewBox="0 0 16 16" className="h-4 w-4" fill="none" stroke="#000"><path d="M.5 4.500h11v11H.5zM3.500 4V1.500h11v11H12" /></svg>
        </button>
        <button type="button" aria-label="Close" className="flex w-[68px] items-center justify-center">
          <svg viewBox="0 0 16 16" className="h-4 w-4"><path d="M1 1l14 14M15 1L1 15" stroke="#000" /></svg>
        </button>
      </div>
    </div>
  );
}

function MenuBar() {
  return (
    <nav className="flex h-7 items-center bg-[#cfcfe6] text-[17px] text-[#1a1a2e]">
      <AppIcon className="ml-px h-6 w-7" />
      <button type="button" className="flex h-full w-[74px] items-center bg-[#ffe3b5] pl-3">
        <span><u className="underline-offset-2">S</u>tart</span>
      </button>
      <button type="button" className="pr-4 pl-[10px]">ENOVIA V5 VPM</button>
      <div className="flex flex-1">
        {menus.map((menu) => (
          <button type="button" key={menu} className="px-[18px] first:pl-[10px]">
            <u className="underline-offset-2">{menu[0]}</u>
            {menu.slice(1)}
          </button>
        ))}
      </div>
      <div className="flex h-full gap-1 bg-[#f0f0fa] py-[2px] pl-px">
        <button type="button" aria-label="Minimize document" className="flex w-[25px] items-center justify-center bg-white">
          <svg viewBox="0 0 14 14" className="h-[14px] w-[14px]"><path d="M3 9h8v3H3z" fill="#7d8494" /></svg>
        </button>
        <button type="button" aria-label="Restore document" className="flex w-[25px] items-center justify-center bg-white">
          <svg viewBox="0 0 14 14" className="h-[14px] w-[14px]" fill="none" stroke="#7d8494" strokeWidth="1.500">
            <path d="M1 6h8v6H1zM1 7h8M4 5V2h9v7h-3M4 3h9" />
          </svg>
        </button>
        <button type="button" aria-label="Close document" className="flex w-6 items-center justify-center bg-white">
          <svg viewBox="0 0 14 14" className="h-[14px] w-[14px]"><path d="M3 2l8 10M11 2L3 12" stroke="#7d8494" strokeWidth="3" /></svg>
        </button>
      </div>
    </nav>
  );
}

function TopToolbars() {
  const [body, setBody] = useState('Main_Body');

  return (
    <div className="overflow-hidden border-b-[3px] border-[#77778a] bg-[linear-gradient(to_bottom,#fff_0,#fff_4px,#cfcfe6_18px,#cfcfe6_98px,#9c9cb2_115px)] pt-[6px]">
      <div className="flex h-[60px]">
        <ToolGroup tools={bodyTools} className="ml-5" />
        <div className="relative mt-2 h-[35px] w-[243px] shrink-0 border-2 border-t-[#77778a] border-r-white border-b-white border-l-[#77778a] bg-white">
          <select
            aria-label="In Work Object"
            value={body}
            onChange={(e) => setBody(e.target.value)}
            className="h-full w-full appearance-none bg-white pl-1 text-[17px] text-[#1a1a2e] outline-none"
          >
            <option>Main_Body</option>
            <option>PartBody</option>
          </select>
          <span className="pointer-events-none absolute inset-y-0 right-0 flex w-6 items-center justify-center border-2 border-t-[#f2f2f2] border-r-[#6e6e6e] border-b-[#6e6e6e] border-l-[#f2f2f2] bg-[#e2e2e2]">
            <svg viewBox="0 0 12 8" className="h-2 w-3"><path d="M1 1h10L6 7z" /></svg>
          </span>
        </div>
        <ToolGroup tools={dressUpTools} className="ml-5" />
        <ToolGroup tools={sketchTools} className="ml-[13px]" />
        <ToolGroup
          tools={[
            { icon: 'constraintDialog', label: 'Constraints Defined in Dialog Box' },
            { icon: 'constraint', label: 'Constraint' },
          ]}
          className="ml-[34px]"
        />
        <ToolGroup tools={[{ icon: 'cursor', label: 'Select', menu: true }]} className="ml-14" />
        <ToolGroup tools={[{ icon: 'translate', label: 'Translation', menu: true }]} className="ml-2" />
        <Divider />
        <ToolButton tool={{ icon: 'mirror', label: 'Mirror' }} />
        <ToolButton tool={{ icon: 'pattern', label: 'Rectangular Pattern', menu: true }} />
        <Divider />
        <ToolButton tool={{ icon: 'scaling', label: 'Scaling', menu: true }} />
      </div>
      <div className="flex h-[49px]">
        <ToolGroup tools={knowledgeTools} className="ml-[13px]" />
        <ToolGroup tools={referenceTools} className="ml-[10px]" />
        <ToolGroup tools={insertTools} className="ml-[10px]" />
        <ToolGroup tools={surfaceTools} className="ml-12" />
        <ToolGroup tools={[{ icon: 'assemble', label: 'Assemble', size: 'xs' }]} className="ml-2" />
        <Divider />
        <ToolButton tool={{ icon: 'add', label: 'Add', menu: true }} />
        <ToolButton tool={{ icon: 'unionTrim', label: 'Union Trim', size: 'sm' }} />
        <Divider />
        <ToolButton tool={{ icon: 'lump', label: 'Remove Lump' }} />
        <ToolGroup tools={[{ icon: 'powercopy', label: 'Instantiate From Document' }]} className="ml-3" />
      </div>
    </div>
  );
}

function TreeScrollbar() {
  return (
    <div className="flex w-7 shrink-0 flex-col border-r border-l-2 border-r-[#2c2c80] border-l-[#8c8c9c] bg-[#5a5ac4]">
      <button type="button" aria-label="Scroll up" className="flex h-6 items-center justify-center bg-[#7878f8]">
        <svg viewBox="0 0 14 14" className="h-[14px] w-[14px]"><path d="M7 1l6 12H1z" /></svg>
      </button>
      <div className="flex-[138] bg-[repeating-conic-gradient(#6464dc_0_25%,#52529c_0_50%)] bg-[length:2px_2px]" />
      <div className="flex-[558] border-t-2 border-[#a0a0ff] bg-[#7b7bff]" />
      <button type="button" aria-label="Scroll down" className="flex h-6 items-center justify-center border-t border-b-2 border-[#34349a] bg-[#7878f8]">
        <svg viewBox="0 0 14 14" className="h-[14px] w-[14px]"><path d="M7 13L1 1h12z" /></svg>
      </button>
    </div>
  );
}

function SpecTree() {
  const { branches, height } = getBranches();

  return (
    <div className="relative -mt-[30px] w-80">
      <svg width="320" height={height} className="absolute top-0 left-0" stroke="#fff" strokeWidth="3" aria-hidden="true">
        {branches.map((line, index) => (
          <path key={index} d={`M${line.x} ${line.from}V${line.to}`} />
        ))}
      </svg>
      <ul className="relative">
        {tree.map((node) => (
          <li key={node.label} className={clsx('flex items-center', node.tall ? 'h-10' : 'h-[39px]', indents[node.depth])}>
            {node.state ? (
              <button
                type="button"
                aria-label={node.state === 'open' ? `Collapse ${node.label}` : `Expand ${node.label}`}
                className="h-4 w-4 shrink-0 rounded-full bg-[linear-gradient(to_bottom,#b4b4b4,#6e6e6e)]"
              >
                <svg viewBox="0 0 16 16" className="h-4 w-4" stroke="#000" strokeWidth="3">
                  <path d={node.state === 'open' ? 'M2 7.500h12' : 'M3 8h10M8 3v10'} />
                </svg>
              </button>
            ) : (
              <span className="ml-2 h-[3px] w-2 shrink-0 bg-white" />
            )}
            <span className="h-[3px] w-2 shrink-0 bg-white" />
            <span
              className={clsx(
                'relative ml-px block h-8 w-8 shrink-0',
                node.hidden && 'bg-[repeating-conic-gradient(#a6a6c4_0_25%,#5c5c8c_0_50%)] bg-[length:2px_2px]'
              )}
            >
              <Icon name={node.icon} className={clsx('scale-95', node.hidden && 'opacity-60')} />
              {node.icon === 'body' && !node.hidden && (
                <svg viewBox="0 0 10 10" className="absolute -top-px left-[22px] h-[10px] w-[10px]" stroke="#ffee00" strokeWidth="3">
                  <path d={node.label === 'Drilling' ? 'M0 5h10' : 'M0 5h10M5 0v10'} />
                </svg>
              )}
            </span>
            <span
              className={clsx(
                'mt-2 ml-px rounded-sm bg-[#34346a] px-[3px] font-[Tahoma,"Noto_Sans",sans-serif] text-[16px] leading-[22px] text-[#e4e4f4]',
                node.active && 'underline decoration-2 underline-offset-2'
              )}
            >
              {node.label}
            </span>
          </li>
        ))}
      </ul>
    </div>
  );
}

const holes = [
  { cx: 880, cy: 307, rx: 21, ry: 12 },
  { cx: 561, cy: 492, rx: 21, ry: 12 },
  { cx: 1316, cy: 560, rx: 21, ry: 12 },
  { cx: 997, cy: 745, rx: 21, ry: 12 },
  { cx: 1099, cy: 433, rx: 17, ry: 10 },
  { cx: 777, cy: 620, rx: 17, ry: 10 },
];

const pocketOutline = 'M870 382Q889 371 911 381L1184 541Q1207 554 1187 567L1004 671Q988 680 970 672L696 513Q668 497 697 483Z';

function CasingPart() {
  return (
    <svg viewBox="28 181 1835 746" className="absolute inset-0 h-full w-full" role="img" aria-label="Top cover casing">
      <defs>
        <linearGradient id="holeShade">
          <stop offset="0" stopColor="#a85400" />
          <stop offset=".4" stopColor="#843f00" />
          <stop offset="1" stopColor="#b86000" />
        </linearGradient>
        <linearGradient id="rightFillet" gradientUnits="userSpaceOnUse" x1="913" y1="449" x2="889" y2="491">
          <stop offset="0" stopColor="#a24e00" />
          <stop offset=".3" stopColor="#dc7400" />
          <stop offset=".5" stopColor="#ffa43c" />
          <stop offset=".75" stopColor="#ff9005" />
        </linearGradient>
        <linearGradient id="leftFillet" gradientUnits="userSpaceOnUse" x1="867" y1="449" x2="891" y2="491">
          <stop offset="0" stopColor="#a24e00" />
          <stop offset=".3" stopColor="#dc7400" />
          <stop offset=".5" stopColor="#ffa43c" />
          <stop offset=".75" stopColor="#ff9005" />
        </linearGradient>
        <linearGradient id="cornerWall">
          <stop offset="0" stopColor="#a04e00" />
          <stop offset=".5" stopColor="#6c3400" />
          <stop offset="1" stopColor="#a04e00" />
        </linearGradient>
        <linearGradient id="cornerFillet" x1="0" y1="0" x2="0" y2="1">
          <stop offset="0" stopColor="#944600" />
          <stop offset=".35" stopColor="#e07a08" />
          <stop offset=".65" stopColor="#ffa030" />
          <stop offset="1" stopColor="#ff8f00" />
        </linearGradient>
        <clipPath id="pocketClip">
          <path d={pocketOutline} />
        </clipPath>
      </defs>
      <g stroke="#050508" strokeWidth="2.500" strokeLinejoin="round">
        <path d="M523 498V564L982 831Q997 841 1012 831L1353 633L1358 626V562L997 768Z" fill="#3d3d3d" stroke="none" />
        <path d="M982 764V831Q997 840 1012 831V764Z" fill="#323232" stroke="none" />
        <path d="M518 554Q516 560 523 564L982 831Q997 841 1012 831L1353 633Q1360 629 1359 623" fill="none" />
        <path d="M524 500V564M982 765V831M1011 765V831M1353 568V633" />
        <path d="M868 285Q880 279 893 285L1352 551Q1365 560 1353 569L1012 765Q997 773 982 765L524 500Q512 492 525 483Z" fill="#c0c0c0" />
        {holes.map((hole) => (
          <ellipse key={`${hole.cx}-${hole.cy}`} {...hole} fill="url(#holeShade)" />
        ))}
        <g clipPath="url(#pocketClip)">
          <path d="M660 370H1210V690H660Z" fill="#c46200" stroke="none" />
          <path d="M640 527L868 399Q889 396 913 402L1200 567V720H640Z" fill="#b25800" stroke="none" />
          <path d="M640 544L868 414Q889 404 912 415L1200 581V720H640Z" fill="#9c4c00" stroke="none" />
          <path d="M868 414Q889 404 912 415V449Q889 435 867 449Z" fill="url(#cornerWall)" stroke="none" />
          <path d="M627 588L867 449L889 488L640 632Z" fill="url(#leftFillet)" stroke="none" />
          <path d="M913 449L1200 615L1200 667L889 488Z" fill="url(#rightFillet)" stroke="none" />
          <path d="M640 630L889 488L1200 667V720H640Z" fill="#ff8f00" stroke="none" />
          <path d="M867 449Q889 435 913 449C913 470 901 480 889 488C878 480 867 468 867 449Z" fill="url(#cornerFillet)" stroke="none" />
          <g fill="none" strokeWidth="2">
            <path d="M700 493L868 400Q889 395 913 401L1178 554Q1186 559 1187 567" />
            <path d="M700 509L868 414Q889 404 912 415L1175 567" />
            <path d="M727 529L867 449Q889 436 913 449L1153 587" />
            <path d="M770 556L889 488L1106 612" />
            <path d="M869 382L867 449C867 468 878 480 889 488C901 480 913 470 913 449L911 381" />
            <path d="M1186 542L1178 554Q1171 565 1176 574M686 488Q692 502 701 516M693 514Q694 498 706 490" />
          </g>
        </g>
        <path d={pocketOutline} fill="none" />
      </g>
    </svg>
  );
}

function Compass() {
  return (
    <svg viewBox="0 0 130 180" className="absolute top-[34px] right-[108px] h-[180px] w-[130px]" role="img" aria-label="Compass">
      <g stroke="#d0c4ff" strokeWidth="3" fill="#1d4058" strokeLinejoin="round">
        <path d="M64 31C32 52 12 90 12 121L64 92Z" />
        <path d="M64 31C96 52 117 90 117 121L64 92Z" />
        <path d="M64 111L12 139C0 153 30 176 63 176S128 153 118 139Z" />
        <path d="M64 16V140" />
      </g>
      <circle cx="63" cy="13" r="5" fill="#d0c4ff" />
      <path d="M57 136h14v14H57z" fill="#e00000" />
      <g fill="#e8e020" fontFamily="Noto Sans, sans-serif" fontSize="18">
        <text x="64" y="27">z</text>
        <text x="13" y="137">x</text>
        <text x="113" y="135">y</text>
      </g>
    </svg>
  );
}

function AxisTriad() {
  return (
    <svg viewBox="0 0 75 70" className="absolute right-[13px] bottom-[22px] h-[70px] w-[75px]" aria-hidden="true">
      <path d="M32 16V46L12 58M32 46L58 61" fill="none" stroke="#f4f4fa" strokeWidth="2" />
      <g fill="#f4f4fa" fontFamily="Noto Sans, sans-serif" fontSize="19">
        <text x="32" y="16">z</text>
        <text x="5" y="63">x</text>
        <text x="59" y="63">y</text>
      </g>
    </svg>
  );
}

function Viewport() {
  return (
    <main className="relative min-w-0 flex-1 overflow-hidden bg-[linear-gradient(to_bottom,#333366_0%,#444476_67%,#acacc4_100%)]">
      <CasingPart />
      <SpecTree />
      <Compass />
      <AxisTriad />
      <p className="pointer-events-none absolute inset-x-0 top-[277px] flex items-baseline justify-center pl-6 font-['Liberation_Serif','Noto_Sans_CJK_SC',serif] text-[73px] leading-[96px] whitespace-nowrap text-white/80 [text-shadow:1px_1px_1px_rgba(0,0,0,0.7)]">
        <span className="text-[80px] font-light">莫西网</span>www.3dmox.com
      </p>
    </main>
  );
}

function SideToolbar() {
  return (
    <aside className="w-[53px] shrink-0 bg-[linear-gradient(to_right,#fff_0,#fff_5px,#cfcfe6_14px,#cfcfe6_42px,#b4b4cc_53px)] pt-[15px]">
      <span className="ml-[7px] block h-1 w-[25px] border-t-2 border-b-2 border-t-white border-b-[#9d9db2]" />
      <div className="mt-1 ml-[14px]">
        <ToolButton tool={{ icon: 'sketch', label: 'Sketch', menu: true }} />
      </div>
      <span className="mt-4 ml-[7px] block h-1 w-[25px] border-t-2 border-b-2 border-t-white border-b-[#9d9db2]" />
      <div className="mt-1 ml-3">
        <ToolButton tool={{ icon: 'workshop', label: 'Part Design Workbench' }} />
      </div>
    </aside>
  );
}

function BottomToolbar() {
  return (
    <div className="flex h-14 overflow-hidden border-b-2 border-[#77778a] bg-[linear-gradient(to_bottom,#fff_0,#fff_4px,#cfcfe6_18px,#cfcfe6_36px,#9c9cb2_54px)] pt-[7px]">
      <ToolGroup tools={[{ icon: 'partDesign', label: 'Part Design' }]} className="ml-7" />
      <ToolGroup
        tools={[
          { icon: 'catalog', label: 'Catalog Browser', menu: true },
          { icon: 'catalogOpen', label: 'Open Catalog', menu: true },
        ]}
        className="ml-11"
      />
      <ToolGroup tools={standardTools} className="ml-[34px]" />
      <ToolGroup tools={[{ icon: 'send', label: 'Generate CATPart' }]} className="ml-12" />
      <ToolGroup tools={[{ icon: 'camera', label: 'Capture' }]} className="ml-9" />
      <ToolGroup
        tools={[
          { icon: 'measure', label: 'Measure Between' },
          { icon: 'clamp', label: 'Measure Item' },
          { icon: 'weight', label: 'Measure Inertia' },
        ]}
        className="ml-[18px]"
      />
      <ToolGroup tools={viewTools} className="ml-2" />
      <ToolGroup tools={analysisTools} className="ml-[18px]" />
      <svg viewBox="0 0 68 48" className="-mt-[5px] mr-[6px] ml-auto h-12 w-[68px] shrink-0 overflow-visible" role="img" aria-label="3DS CATIA">
        <path d="M17 1c10-2 15 3 9 8l-7 4c5-4 8-9-2-12z" fill="#d82028" stroke="#d82028" />
        <g fontFamily="Liberation Sans, sans-serif" fontStyle="italic" fontWeight="bold">
          <text x="5" y="29" fontSize="21" fill="#4a3c98">D</text>
          <text x="25" y="29" fontSize="21" fill="#f0a020">S</text>
          <text x="14" y="46" fontSize="15" fill="#3c348c">CATIA</text>
        </g>
      </svg>
    </div>
  );
}

function StatusBar() {
  return (
    <footer className="flex h-[33px] items-center bg-[#cfcfe6] pr-[100px] pl-1 text-[17px] text-[#1a1a2e]">
      <span className="flex-1">Select an object or a command</span>
      <input
        aria-label="Power input"
        className="mt-1 h-7 w-[448px] border-2 border-t-[#7c7c8c] border-r-white border-b-[#e8e8f4] border-l-[#7c7c8c] bg-[#cfcfe6] px-1 outline-none"
      />
    </footer>
  );
}

export default function App() {
  return (
    <div className="flex h-screen flex-col overflow-hidden bg-[#cfcfe6] font-['Open_Sans','Noto_Sans',sans-serif]">
      <TitleBar />
      <MenuBar />
      <TopToolbars />
      <div className="flex min-h-0 flex-1">
        <TreeScrollbar />
        <Viewport />
        <SideToolbar />
      </div>
      <BottomToolbar />
      <StatusBar />
    </div>
  );
}
